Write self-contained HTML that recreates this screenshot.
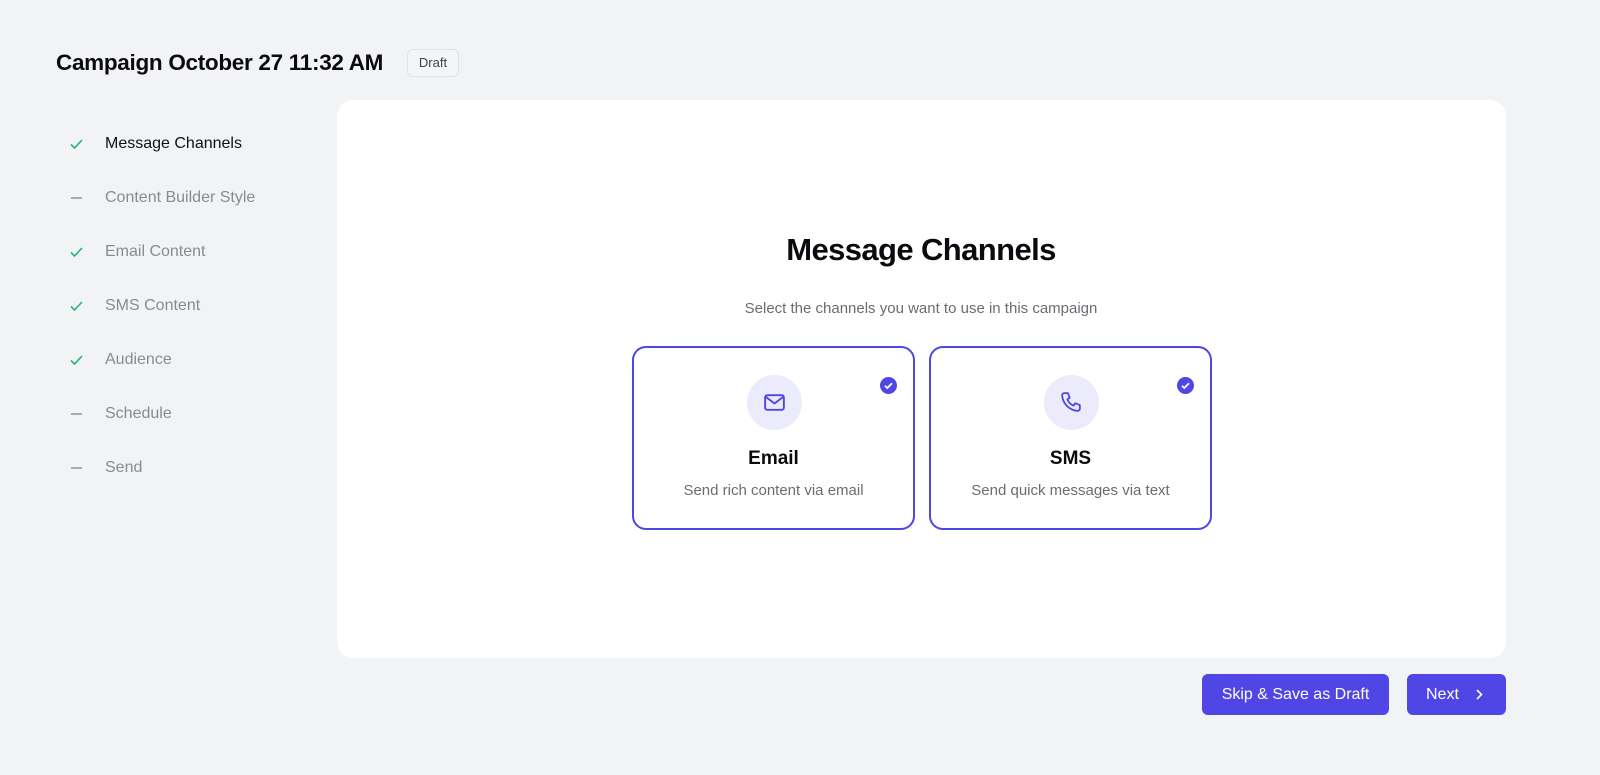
<!DOCTYPE html>
<html><head><style>
*{margin:0;padding:0;box-sizing:border-box}
body{width:1600px;height:775px;background:#f2f3f5;font-family:"Liberation Sans",sans-serif;position:relative;overflow:hidden}
.t{position:absolute;left:56px;top:50px;font-size:22.5px;font-weight:bold;color:#0b0b0f;letter-spacing:-0.3px}
.badge{position:absolute;left:407px;top:49px;width:52px;height:28px;border:1px solid #e0e1e4;border-radius:6px;background:#f4f5f7;font-size:13px;color:#444;text-align:center;line-height:26px}
.nav{position:absolute;left:68px;font-size:16px;color:#8a8b91}
.nav span{position:absolute;left:37px;top:0;white-space:nowrap}
.nav svg{position:absolute;left:0;top:0}
.panel{position:absolute;left:337px;top:100px;width:1169px;height:558px;background:#fff;border-radius:16px}
h1{position:absolute;left:521px;width:800px;top:232px;text-align:center;font-size:31px;font-weight:bold;color:#0b0b0f;letter-spacing:-0.6px}
.sub{position:absolute;left:521px;width:800px;top:300px;text-align:center;font-size:15px;color:#6b6c73}
.card{position:absolute;top:346px;width:283px;height:184px;border:2px solid #4f46e5;border-radius:14px;background:#fff}
.ic{position:absolute;left:113px;top:27px;width:55px;height:55px;border-radius:50%;background:#ebebfc}
.ic svg{position:absolute;left:15px;top:15px}
.ck{position:absolute;left:246px;top:29px;width:17px;height:17px;border-radius:50%;background:#4f46e5}
.ct{position:absolute;left:0;right:0;top:100px;text-align:center;font-size:19px;font-weight:600;color:#0b0b0f}
.cd{position:absolute;left:0;right:0;top:134px;text-align:center;font-size:15px;color:#6b6c73}
.btn{position:absolute;top:674px;height:41px;background:#4f46e5;border-radius:6px;color:#fff;font-size:16px;line-height:41px}
</style></head><body>
<div class="t">Campaign October 27 11:32 AM</div>
<div class="badge">Draft</div>

<div class="nav" style="top:135px;color:#111"><svg width="18" height="18" viewBox="0 0 18 18"><path d="M3 9.5l3.5 3.5L14 5" fill="none" stroke="#22b573" stroke-width="1.6"/></svg><span>Message Channels</span></div>
<div class="nav" style="top:189px"><svg width="18" height="18" viewBox="0 0 18 18"><path d="M3 9h11" stroke="#999" stroke-width="1.6"/></svg><span>Content Builder Style</span></div>
<div class="nav" style="top:243px"><svg width="18" height="18" viewBox="0 0 18 18"><path d="M3 9.5l3.5 3.5L14 5" fill="none" stroke="#22b573" stroke-width="1.6"/></svg><span>Email Content</span></div>
<div class="nav" style="top:297px"><svg width="18" height="18" viewBox="0 0 18 18"><path d="M3 9.5l3.5 3.5L14 5" fill="none" stroke="#22b573" stroke-width="1.6"/></svg><span>SMS Content</span></div>
<div class="nav" style="top:351px"><svg width="18" height="18" viewBox="0 0 18 18"><path d="M3 9.5l3.5 3.5L14 5" fill="none" stroke="#22b573" stroke-width="1.6"/></svg><span>Audience</span></div>
<div class="nav" style="top:405px"><svg width="18" height="18" viewBox="0 0 18 18"><path d="M3 9h11" stroke="#999" stroke-width="1.6"/></svg><span>Schedule</span></div>
<div class="nav" style="top:459px"><svg width="18" height="18" viewBox="0 0 18 18"><path d="M3 9h11" stroke="#999" stroke-width="1.6"/></svg><span>Send</span></div>

<div class="panel"></div>
<h1>Message Channels</h1>
<div class="sub">Select the channels you want to use in this campaign</div>

<div class="card" style="left:632px">
<div class="ic"><svg width="25" height="25" viewBox="0 0 24 24" fill="none" stroke="#4f46e5" stroke-width="1.8" stroke-linejoin="round"><rect x="3" y="5" width="18" height="14" rx="2"/><path d="M3.5 6.5L12 13l8.5-6.5"/></svg></div>
<div class="ck"><svg width="17" height="17" viewBox="0 0 17 17"><path d="M5 8.8l2.3 2.2L12 6.3" fill="none" stroke="#fff" stroke-width="1.8"/></svg></div>
<div class="ct">Email</div><div class="cd">Send rich content via email</div></div>

<div class="card" style="left:929px">
<div class="ic"><svg width="25" height="25" viewBox="0 0 24 24" fill="none" stroke="#4f46e5" stroke-width="1.7" stroke-linejoin="round"><path d="M5 3h3.5l1.8 4.5-2.3 1.4a11 11 0 0 0 6.1 6.1l1.4-2.3L20 14.5V18a2 2 0 0 1-2 2A16 16 0 0 1 3 5a2 2 0 0 1 2-2z"/></svg></div>
<div class="ck"><svg width="17" height="17" viewBox="0 0 17 17"><path d="M5 8.8l2.3 2.2L12 6.3" fill="none" stroke="#fff" stroke-width="1.8"/></svg></div>
<div class="ct">SMS</div><div class="cd">Send quick messages via text</div></div>

<div class="btn" style="left:1202px;width:187px;text-align:center">Skip &amp; Save as Draft</div>
<div class="btn" style="left:1407px;width:99px;padding-left:19px">Next<svg style="position:absolute;left:66px;top:14px" width="12" height="13" viewBox="0 0 12 13"><path d="M4 2l4.5 4.5L4 11" fill="none" stroke="#fff" stroke-width="1.6"/></svg></div>
</body></html>
